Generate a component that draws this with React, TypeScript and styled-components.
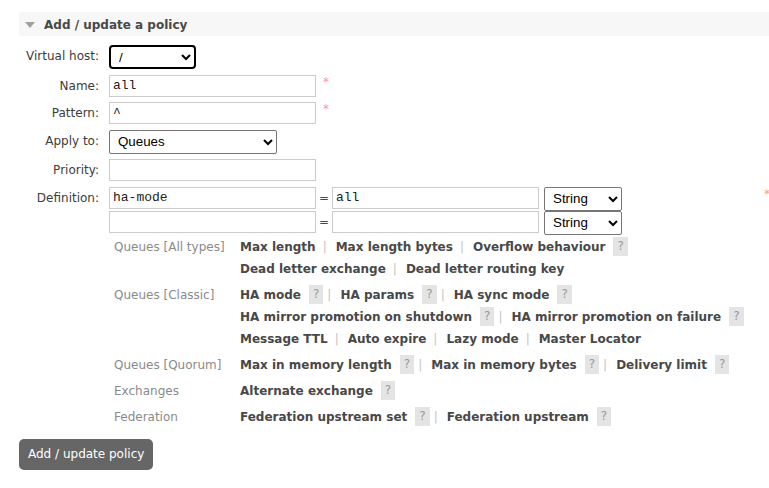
import styled, { createGlobalStyle } from 'styled-components';

const GlobalStyle = createGlobalStyle`
  html, body {
    margin: 0;
    padding: 0;
    background: #fff;
    overflow: hidden;
  }
  body {
    font: 12px "DejaVu Sans", Verdana, sans-serif;
    color: #484848;
  }
`;

const Page = styled.div`
  width: 820px;
  padding: 12px 0 0 19px;
`;

const SectionHeader = styled.h2`
  display: flex;
  align-items: center;
  gap: 9px;
  margin: 0;
  height: 24px;
  padding-left: 6px;
  padding-top: 1px;
  box-sizing: border-box;
  background: #f7f7f7;
  font-size: 12px;
  font-weight: bold;
  color: #484848;
`;

const Triangle = styled.span`
  width: 0;
  height: 0;
  border-left: 5px solid transparent;
  border-right: 5px solid transparent;
  border-top: 6px solid #a0a0a0;
`;

const Form = styled.div`
  display: grid;
  grid-template-columns: 80px 1fr;
  column-gap: 10px;
  margin-top: 6px;
`;

const Label = styled.div`
  text-align: right;
  padding: 3px 0 2.5px;
  line-height: 22px;
  white-space: nowrap;
  color: #3c3c3c;
`;

const Field = styled.div`
  display: flex;
  align-items: flex-start;
  padding: 3px 0 2.5px;
`;

const TextInput = styled.input<{ $width?: number }>`
  box-sizing: border-box;
  width: ${({ $width }) => $width ?? 207}px;
  height: 22px;
  border: 1px solid #ccc;
  border-radius: 0;
  padding: 0 3px;
  margin: 0;
  font: 13px "Liberation Mono", "Courier New", monospace;
  color: #222;
  background: #fff;
  outline: none;
`;

const Select = styled.select<{ $width: number; $focused?: boolean }>`
  box-sizing: border-box;
  width: ${({ $width }) => $width}px;
  height: 24px;
  margin: 0;
  padding: 0 4px;
  font: 13.33px "Liberation Sans", Arial, sans-serif;
  color: #000;
  background: #fff;
  border: ${({ $focused }) => ($focused ? '2px solid #000' : '1px solid #767676')};
  border-radius: ${({ $focused }) => ($focused ? '4px' : '2px')};
  outline: none;
`;

const Required = styled.span<{ $offset?: number }>`
  color: #f99;
  font-size: 12px;
  line-height: 12px;
  margin-left: ${({ $offset }) => $offset ?? 7}px;
  margin-top: 1px;
`;

const DefinitionCell = styled.div`
  padding: 3px 0;
  width: 661px;
`;

const DefinitionTop = styled.div`
  display: flex;
  align-items: flex-start;
  justify-content: space-between;
`;

const MultiField = styled.div`
  display: flex;
  flex-direction: column;
`;

const PairRow = styled.div`
  display: flex;
  align-items: flex-start;
  height: 24px;
`;

const Equals = styled.span`
  width: 16px;
  text-align: center;
  line-height: 22px;
  color: #484848;
`;

const Gap = styled.span`
  width: 5px;
`;

const HelpTable = styled.div`
  display: grid;
  grid-template-columns: 126px 1fr;
  padding-left: 5px;
`;

const Category = styled.div`
  color: #8a8a8a;
  line-height: 22px;
  padding: 1px 0 3px;
  white-space: nowrap;
`;

const Links = styled.div`
  padding: 1px 0 3px;
`;

const LinkLine = styled.div`
  display: flex;
  align-items: center;
  height: 22px;
  white-space: nowrap;
`;

const ArgLink = styled.span`
  font-weight: bold;
  color: #484848;
`;

const Help = styled.span`
  display: inline-block;
  margin-left: 8px;
  padding: 0 4px;
  height: 19px;
  line-height: 19px;
  background: #e4e4e4;
  color: #999;
`;

const Sep = styled.span<{ $afterHelp?: boolean }>`
  color: #c4c4c4;
  margin: 0 9px 0 ${({ $afterHelp }) => ($afterHelp ? 4 : 7)}px;
`;

const SubmitButton = styled.button`
  margin-top: 5px;
  height: 31px;
  padding: 0 9px;
  border: none;
  border-radius: 5px;
  background: #666;
  color: #fff;
  font: 12px "DejaVu Sans", Verdana, sans-serif;
  cursor: pointer;
`;

type Arg = { name: string; help?: boolean };

const helpGroups: Array<{ title: string; lines: Arg[][] }> = [
  {
    title: 'Queues [All types]',
    lines: [
      [{ name: 'Max length' }, { name: 'Max length bytes' }, { name: 'Overflow behaviour', help: true }],
      [{ name: 'Dead letter exchange' }, { name: 'Dead letter routing key' }],
    ],
  },
  {
    title: 'Queues [Classic]',
    lines: [
      [{ name: 'HA mode', help: true }, { name: 'HA params', help: true }, { name: 'HA sync mode', help: true }],
      [
        { name: 'HA mirror promotion on shutdown', help: true },
        { name: 'HA mirror promotion on failure', help: true },
      ],
      [{ name: 'Message TTL' }, { name: 'Auto expire' }, { name: 'Lazy mode' }, { name: 'Master Locator' }],
    ],
  },
  {
    title: 'Queues [Quorum]',
    lines: [
      [
        { name: 'Max in memory length', help: true },
        { name: 'Max in memory bytes', help: true },
        { name: 'Delivery limit', help: true },
      ],
    ],
  },
  { title: 'Exchanges', lines: [[{ name: 'Alternate exchange', help: true }]] },
  {
    title: 'Federation',
    lines: [[{ name: 'Federation upstream set', help: true }, { name: 'Federation upstream', help: true }]],
  },
];

function ArgLine({ args }: { args: Arg[] }) {
  return (
    <LinkLine>
      {args.map((arg, i) => (
        <span key={arg.name} style={{ display: 'contents' }}>
          {i > 0 && <Sep $afterHelp={args[i - 1].help}>|</Sep>}
          <ArgLink>{arg.name}</ArgLink>
          {arg.help && <Help>?</Help>}
        </span>
      ))}
    </LinkLine>
  );
}

export default function App() {
  return (
    <Page>
      <GlobalStyle />
      <SectionHeader>
        <Triangle />
        Add / update a policy
      </SectionHeader>

      <Form>
        <Label>Virtual host:</Label>
        <Field>
          <Select $width={87} $focused defaultValue="/">
            <option value="/">/</option>
          </Select>
        </Field>

        <Label>Name:</Label>
        <Field>
          <TextInput defaultValue="all" />
          <Required>*</Required>
        </Field>

        <Label>Pattern:</Label>
        <Field>
          <TextInput defaultValue="^" />
          <Required>*</Required>
        </Field>

        <Label>Apply to:</Label>
        <Field>
          <Select $width={168} defaultValue="queues">
            <option value="queues">Queues</option>
            <option value="exchanges">Exchanges</option>
            <option value="all">Exchanges and queues</option>
          </Select>
        </Field>

        <Label>Priority:</Label>
        <Field>
          <TextInput />
        </Field>

        <Label>Definition:</Label>
        <DefinitionCell>
          <DefinitionTop>
            <MultiField>
              <PairRow>
                <TextInput defaultValue="ha-mode" />
                <Equals>=</Equals>
                <TextInput defaultValue="all" />
                <Gap />
                <Select $width={78} defaultValue="string">
                  <option value="string">String</option>
                  <option value="number">Number</option>
                </Select>
              </PairRow>
              <PairRow>
                <TextInput />
                <Equals>=</Equals>
                <TextInput />
                <Gap />
                <Select $width={78} defaultValue="string">
                  <option value="string">String</option>
                  <option value="number">Number</option>
                </Select>
              </PairRow>
            </MultiField>
            <Required $offset={0}>*</Required>
          </DefinitionTop>

          <HelpTable>
            {helpGroups.map((group) => (
              <span key={group.title} style={{ display: 'contents' }}>
                <Category>{group.title}</Category>
                <Links>
                  {group.lines.map((line, i) => (
                    <ArgLine key={i} args={line} />
                  ))}
                </Links>
              </span>
            ))}
          </HelpTable>
        </DefinitionCell>
      </Form>

      <SubmitButton>Add / update policy</SubmitButton>
    </Page>
  );
}
